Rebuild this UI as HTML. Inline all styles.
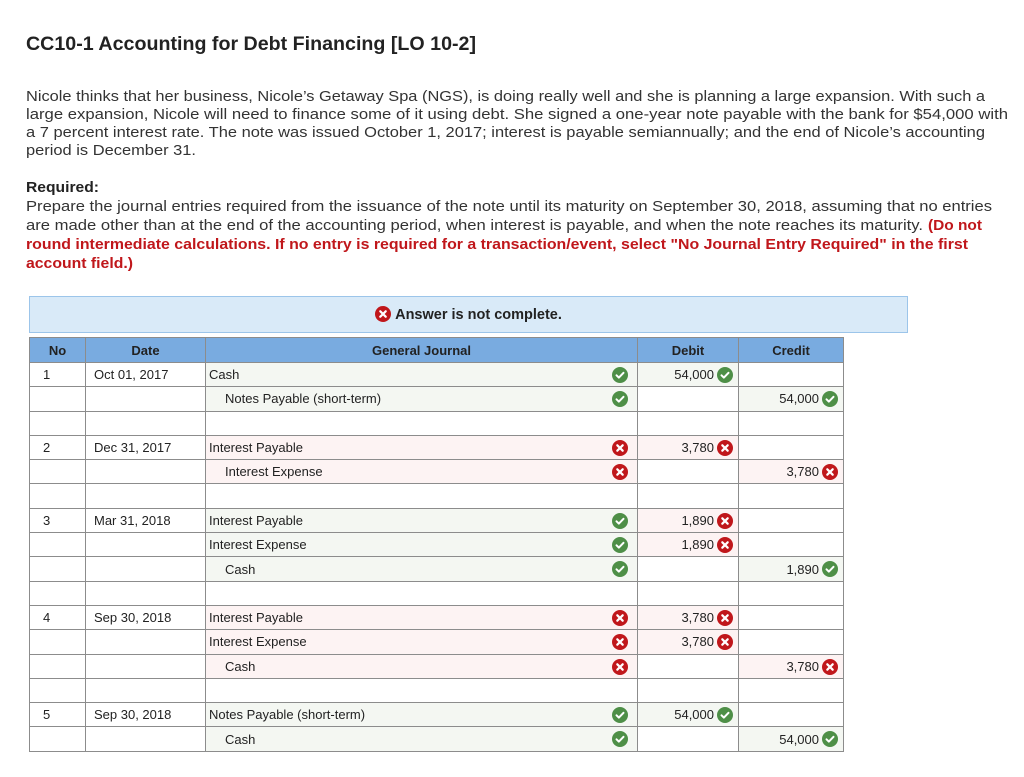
<!DOCTYPE html>
<html><head><meta charset="utf-8"><style>
body{margin:0;width:1024px;height:777px;background:#fff;position:relative;overflow:hidden;font-family:"Liberation Sans",Arial,sans-serif;color:#333}
svg.t{position:absolute;left:0;top:0}
.ban{position:absolute;left:29px;top:296px;width:877px;height:35px;background:#d9eaf8;border:1px solid #9cc5ea}
.ban span{position:absolute;left:0;right:0;top:9px;text-align:center;font-weight:bold;font-size:14.5px;color:#222}
.ban svg{vertical-align:-3px;margin-right:4px}
table{position:absolute;left:29px;top:337px;border-collapse:collapse;table-layout:fixed;font-size:13px;color:#222}
td,th{border:1px solid #8c8c8c;padding:0;height:23.3px;white-space:nowrap;overflow:hidden}
th{background:#79abe0;height:24px;font-weight:bold;font-size:13px}
td.n{padding-left:13px}td.d{padding-left:8px}
td.j{padding-left:3px;position:relative}
td.j.i{padding-left:19px}
.g{background:#f4f7f2}.r{background:#fdf3f3}
td.v{text-align:right;padding-right:24px;position:relative}
svg.ic{position:absolute;top:4px}
td.j svg.ic{left:406px}
td.v svg.ic{right:5px}
</style></head><body>
<svg class="t" width="1024" height="290" xmlns="http://www.w3.org/2000/svg" font-family="Liberation Sans, Arial, sans-serif">
<text x="26" y="50" font-size="19" font-weight="bold" fill="#222" textLength="450" lengthAdjust="spacingAndGlyphs">CC10-1 Accounting for Debt Financing [LO 10-2]</text>
<g font-size="14.5" fill="#333" lengthAdjust="spacingAndGlyphs">
<text x="26" y="101" textLength="959" lengthAdjust="spacingAndGlyphs">Nicole thinks that her business, Nicole’s Getaway Spa (NGS), is doing really well and she is planning a large expansion. With such a</text>
<text x="26" y="119" textLength="982" lengthAdjust="spacingAndGlyphs">large expansion, Nicole will need to finance some of it using debt. She signed a one-year note payable with the bank for $54,000 with</text>
<text x="26" y="137" textLength="959" lengthAdjust="spacingAndGlyphs">a 7 percent interest rate. The note was issued October 1, 2017; interest is payable semiannually; and the end of Nicole’s accounting</text>
<text x="26" y="155" textLength="170" lengthAdjust="spacingAndGlyphs">period is December 31.</text>
<text x="26" y="192" font-weight="bold" fill="#222" textLength="73" lengthAdjust="spacingAndGlyphs">Required:</text>
<text x="26" y="211" textLength="966" lengthAdjust="spacingAndGlyphs">Prepare the journal entries required from the issuance of the note until its maturity on September 30, 2018, assuming that no entries</text>
<text x="26" y="230" textLength="897" lengthAdjust="spacingAndGlyphs">are made other than at the end of the accounting period, when interest is payable, and when the note reaches its maturity.</text>
<g font-weight="bold" fill="#c0171b">
<text x="928" y="230" textLength="54" lengthAdjust="spacingAndGlyphs">(Do not</text>
<text x="26" y="249" textLength="942" lengthAdjust="spacingAndGlyphs">round intermediate calculations. If no entry is required for a transaction/event, select "No Journal Entry Required" in the first</text>
<text x="26" y="268" textLength="107" lengthAdjust="spacingAndGlyphs">account field.)</text>
</g></g>
<defs>
<symbol id="ok" viewBox="0 0 16 16"><circle cx="8" cy="8" r="8" fill="#4e8f47"/><path d="M4.5 8.3l2.4 2.3 4.6-4.8" stroke="#fff" stroke-width="2" fill="none" stroke-linecap="round" stroke-linejoin="round"/></symbol>
<symbol id="no" viewBox="0 0 16 16"><circle cx="8" cy="8" r="8" fill="#c0171b"/><path d="M5.3 5.3l5.4 5.4M10.7 5.3l-5.4 5.4" stroke="#fff" stroke-width="2.2" stroke-linecap="round"/></symbol>
</defs>
</svg>
<div class="ban"><span><svg width="16" height="16"><use href="#no"/></svg>Answer is not complete.</span></div>
<table>
<colgroup><col style="width:56px"><col style="width:120px"><col style="width:432px"><col style="width:101px"><col style="width:105px"></colgroup>
<tr><th>No</th><th>Date</th><th>General Journal</th><th>Debit</th><th>Credit</th></tr>
<tr><td class="n">1</td><td class="d">Oct 01, 2017</td><td class="j g">Cash<svg class="ic" width="16" height="16"><use href="#ok"/></svg></td><td class="v g">54,000<svg class="ic" width="16" height="16"><use href="#ok"/></svg></td><td class="v"></td></tr>
<tr><td></td><td></td><td class="j i g">Notes Payable (short-term)<svg class="ic" width="16" height="16"><use href="#ok"/></svg></td><td class="v"></td><td class="v g">54,000<svg class="ic" width="16" height="16"><use href="#ok"/></svg></td></tr>
<tr><td></td><td></td><td></td><td></td><td></td></tr>
<tr><td class="n">2</td><td class="d">Dec 31, 2017</td><td class="j r">Interest Payable<svg class="ic" width="16" height="16"><use href="#no"/></svg></td><td class="v r">3,780<svg class="ic" width="16" height="16"><use href="#no"/></svg></td><td class="v"></td></tr>
<tr><td></td><td></td><td class="j i r">Interest Expense<svg class="ic" width="16" height="16"><use href="#no"/></svg></td><td class="v"></td><td class="v r">3,780<svg class="ic" width="16" height="16"><use href="#no"/></svg></td></tr>
<tr><td></td><td></td><td></td><td></td><td></td></tr>
<tr><td class="n">3</td><td class="d">Mar 31, 2018</td><td class="j g">Interest Payable<svg class="ic" width="16" height="16"><use href="#ok"/></svg></td><td class="v r">1,890<svg class="ic" width="16" height="16"><use href="#no"/></svg></td><td class="v"></td></tr>
<tr><td></td><td></td><td class="j g">Interest Expense<svg class="ic" width="16" height="16"><use href="#ok"/></svg></td><td class="v r">1,890<svg class="ic" width="16" height="16"><use href="#no"/></svg></td><td class="v"></td></tr>
<tr><td></td><td></td><td class="j i g">Cash<svg class="ic" width="16" height="16"><use href="#ok"/></svg></td><td class="v"></td><td class="v g">1,890<svg class="ic" width="16" height="16"><use href="#ok"/></svg></td></tr>
<tr><td></td><td></td><td></td><td></td><td></td></tr>
<tr><td class="n">4</td><td class="d">Sep 30, 2018</td><td class="j r">Interest Payable<svg class="ic" width="16" height="16"><use href="#no"/></svg></td><td class="v r">3,780<svg class="ic" width="16" height="16"><use href="#no"/></svg></td><td class="v"></td></tr>
<tr><td></td><td></td><td class="j r">Interest Expense<svg class="ic" width="16" height="16"><use href="#no"/></svg></td><td class="v r">3,780<svg class="ic" width="16" height="16"><use href="#no"/></svg></td><td class="v"></td></tr>
<tr><td></td><td></td><td class="j i r">Cash<svg class="ic" width="16" height="16"><use href="#no"/></svg></td><td class="v"></td><td class="v r">3,780<svg class="ic" width="16" height="16"><use href="#no"/></svg></td></tr>
<tr><td></td><td></td><td></td><td></td><td></td></tr>
<tr><td class="n">5</td><td class="d">Sep 30, 2018</td><td class="j g">Notes Payable (short-term)<svg class="ic" width="16" height="16"><use href="#ok"/></svg></td><td class="v g">54,000<svg class="ic" width="16" height="16"><use href="#ok"/></svg></td><td class="v"></td></tr>
<tr><td></td><td></td><td class="j i g">Cash<svg class="ic" width="16" height="16"><use href="#ok"/></svg></td><td class="v"></td><td class="v g">54,000<svg class="ic" width="16" height="16"><use href="#ok"/></svg></td></tr>
</table>
</body></html>
